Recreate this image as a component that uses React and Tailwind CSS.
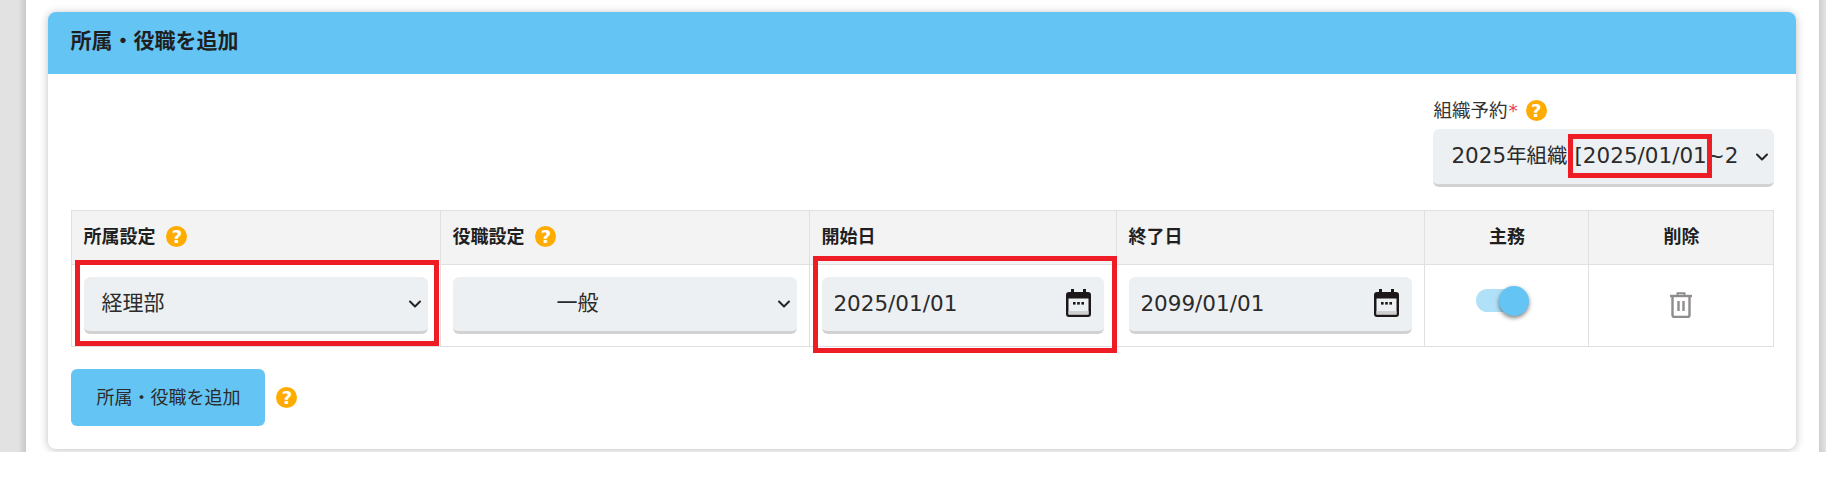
import { ChevronDown } from 'lucide-react'

function Help({ className = '' }) {
  return (
    <span className={`inline-flex h-[21px] w-[21px] shrink-0 items-center justify-center rounded-full bg-[#ffab00] text-[18px] leading-none font-extrabold text-white ${className}`}>
      ?
    </span>
  )
}

function CalendarIcon() {
  return (
    <svg width="25" height="28" viewBox="0 0 25 28" className="mb-[2px] shrink-0">
      <path d="M5 0h3v3h9V0h3v3h2a3 3 0 0 1 3 3v19a3 3 0 0 1-3 3H3a3 3 0 0 1-3-3V6a3 3 0 0 1 3-3h2z" fill="#1c1718" />
      <rect x="2.5" y="9.5" width="20" height="16" fill="#edf0f2" />
      <rect x="2.5" y="22" width="20" height="3.5" fill="#cfcfcf" />
      <rect x="7" y="13" width="2.6" height="2.6" fill="#1c1718" />
      <rect x="11.2" y="13" width="2.6" height="2.6" fill="#1c1718" />
      <rect x="15.4" y="13" width="2.6" height="2.6" fill="#1c1718" />
    </svg>
  )
}

function TrashIcon() {
  return (
    <svg width="22" height="26" viewBox="0 0 22 26" fill="none" stroke="#8f8b8e" strokeWidth="2.4" className="mb-[2px]">
      <path d="M0 4h22" />
      <path d="M7.5 3.5V1.2h7v2.3" strokeWidth="2" />
      <path d="M2.5 4v19a2 2 0 0 0 2 2h13a2 2 0 0 0 2-2V4" />
      <path d="M8.5 9v10M13.5 9v10" />
    </svg>
  )
}

function SelectBox({ children, className = '', chevronClass = '' }) {
  return (
    <div className={`flex items-center rounded-[6px] border-b-[3px] border-[#d2d2d2] bg-[#edf0f2] text-[#2b2b2b] ${className}`}>
      <div className="min-w-0 flex-1 whitespace-nowrap overflow-hidden">{children}</div>
      <ChevronDown size={20} strokeWidth={2.4} className={`shrink-0 text-[#222] ${chevronClass}`} />
    </div>
  )
}

function DateBox({ value }) {
  return (
    <div className="flex h-[57px] items-center justify-between rounded-[6px] border-b-[3px] border-[#d2d2d2] bg-[#edf0f2] pr-[13px] pl-[11px] text-[21.5px] text-[#2b2b2b]">
      <span>{value}</span>
      <CalendarIcon />
    </div>
  )
}

export default function App() {
  const th = 'border border-[#e0e0e0] bg-[#f3f3f3] pb-[2px] text-[18px] font-bold text-[#1f1f1f]'
  const td = 'border border-[#e0e0e0] align-middle'

  return (
    <div className="relative flex w-full font-['DejaVu_Sans','Noto_Sans_CJK_JP',sans-serif]">
      <div className="h-[452px] w-[27px] bg-gradient-to-r from-[#e2e2e2] from-70% to-[#c9c9c9]" />

      <main className="h-[452px] flex-1 bg-white pt-3 pr-[23px] pl-[22px]">
        <section className="h-[437px] rounded-[8px] bg-white shadow-[0_1px_8px_rgba(0,0,0,0.25)]">
          <h2 className="flex h-[62px] items-center rounded-t-[8px] bg-[#64c4f4] pb-[3px] pl-[22px] text-[21px] font-bold text-[#1f1f1f]">
            所属・役職を追加
          </h2>

          <div className="pt-[22px] pr-[22px] pl-[23px]">
            <div className="flex justify-end">
              <div className="w-[341px]">
                <div className="flex h-[33px] items-center pb-[4px] text-[18.5px] text-[#333]">
                  組織予約<span className="ml-[1px] text-[#e8395a]">*</span>
                  <Help className="ml-[8px]" />
                </div>
                <SelectBox className="h-[58px] text-[21.5px]" chevronClass="mr-[2px] ml-[10px]">
                  <span className="pl-[18px]">2025<span className="text-[20.5px]">年組織</span> [2025/01/01~2</span>
                </SelectBox>
              </div>
            </div>

            <table className="mt-[23px] w-[1702px] table-fixed border-collapse">
              <colgroup>
                <col className="w-[369px]" />
                <col className="w-[369px]" />
                <col className="w-[307px]" />
                <col className="w-[308px]" />
                <col className="w-[164px]" />
                <col className="w-[185px]" />
              </colgroup>
              <thead>
                <tr className="h-[54px]">
                  <th className={`${th} pl-[11px] text-left`}>
                    <span className="flex items-center">所属設定<Help className="ml-[11px]" /></span>
                  </th>
                  <th className={`${th} pl-[11px] text-left`}>
                    <span className="flex items-center">役職設定<Help className="ml-[11px]" /></span>
                  </th>
                  <th className={`${th} pl-[11px] text-left`}>開始日</th>
                  <th className={`${th} pl-[11px] text-left`}>終了日</th>
                  <th className={`${th} text-center`}>主務</th>
                  <th className={`${th} text-center`}>削除</th>
                </tr>
              </thead>
              <tbody>
                <tr className="h-[82px]">
                  <td className={`${td} pr-[12px] pl-[12px]`}>
                    <SelectBox className="h-[57px] text-[21px]" chevronClass="mr-[3px]">
                      <span className="pl-[17px]">経理部</span>
                    </SelectBox>
                  </td>
                  <td className={`${td} pr-[12px] pl-[12px]`}>
                    <SelectBox className="h-[57px] text-[21px]" chevronClass="mr-[3px]">
                      <span className="pl-[103px]">一般</span>
                    </SelectBox>
                  </td>
                  <td className={`${td} pr-[12px] pl-[12px]`}>
                    <DateBox value="2025/01/01" />
                  </td>
                  <td className={`${td} pr-[12px] pl-[12px]`}>
                    <DateBox value="2099/01/01" />
                  </td>
                  <td className={td}>
                    <div className="mb-[10px] flex pl-[51px]">
                      <div className="relative h-[23px] w-[48px] rounded-full bg-[#b0e1f9]">
                        <div className="absolute top-[-3px] left-[23px] h-[30px] w-[30px] rounded-full bg-[#64c4f4] shadow-[0_2px_4px_rgba(0,0,0,0.5)]" />
                      </div>
                    </div>
                  </td>
                  <td className={td}>
                    <div className="flex justify-center">
                      <TrashIcon />
                    </div>
                  </td>
                </tr>
              </tbody>
            </table>

            <div className="mt-[22px] flex items-center">
              <button className="h-[57px] w-[194px] rounded-[6px] bg-[#64c4f4] text-[18px] text-[#2b2b2b]">
                所属・役職を追加
              </button>
              <Help className="ml-[11px]" />
            </div>
          </div>
        </section>
      </main>

      <div className="h-[452px] w-[7px] bg-gradient-to-r from-[#cfcfcf] to-[#e2e2e2]" />
      <div className="w-[11px]" />

      {/* red annotation frames */}
      <div className="pointer-events-none absolute top-[134px] left-[1568px] h-[44px] w-[144px] border-[5px] border-[#ee1c25]" />
      <div className="pointer-events-none absolute top-[260px] left-[75px] h-[86px] w-[364px] border-[5px] border-[#ee1c25]" />
      <div className="pointer-events-none absolute top-[256px] left-[813px] h-[97px] w-[304px] border-[5px] border-[#ee1c25]" />
    </div>
  )
}
